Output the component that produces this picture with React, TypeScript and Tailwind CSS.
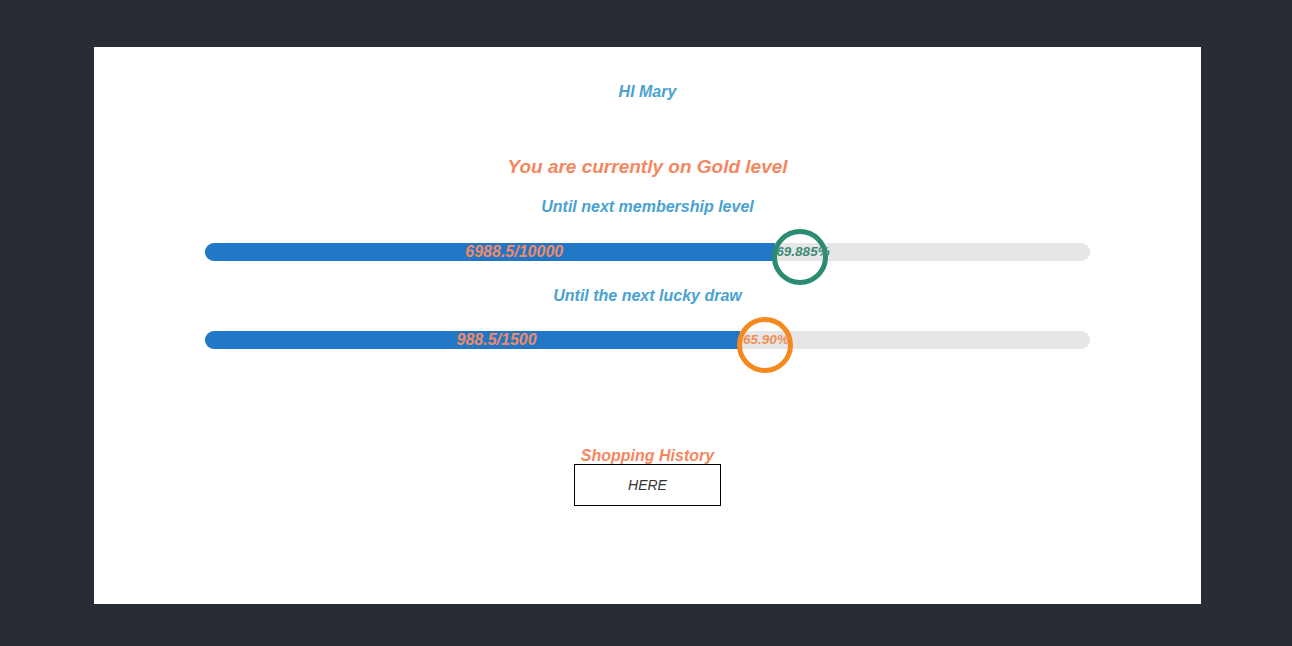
import React from "react";

const BAR_W = 885;

function Progress({
  value,
  label,
  pct,
  ringClass,
  pctTextClass,
  textShift,
}: {
  value: number;
  label: string;
  pct: string;
  ringClass: string;
  pctTextClass: string;
  textShift: number;
}) {
  const fillW = value * BAR_W;
  const circleLeft = Math.round(fillW - 51);
  return (
    <div className="relative h-[18px] w-[885px] rounded-full bg-[#e6e6e6]">
      <div
        className="absolute left-0 top-0 h-[18px] rounded-l-full bg-[#2276c6]"
        style={{ width: circleLeft + 3 }}
      />
      <span
        className="absolute left-0 top-0 h-[18px] text-center text-[16px] font-bold italic leading-[18px] text-[#ef8a68]"
        style={{ width: fillW }}
      >
        {label}
      </span>
      <div
        className={`absolute top-[-14px] h-[56px] w-[56px] rounded-full border-[5px] ${ringClass}`}
        style={{ left: circleLeft }}
      />
      <span
        className={`absolute top-0 h-[18px] w-[56px] whitespace-nowrap text-center text-[13.5px] font-bold italic leading-[18px] ${pctTextClass}`}
        style={{ left: circleLeft + textShift }}
      >
        {pct}
      </span>
    </div>
  );
}

export default function App() {
  return (
    <div
      className="h-[646px] w-[1292px] bg-[#282c34] pl-[94px] pt-[47px]"
      style={{ fontFamily: '"Liberation Sans", Arial, sans-serif' }}
    >
      <div className="flex h-[557px] w-[1107px] flex-col items-center bg-white pt-[35px]">
        <div className="h-[20px] text-[16px] font-bold italic leading-[20px] text-[#4aa2d2]">
          HI Mary
        </div>
        <div className="mt-[53px] h-[24px] text-[19px] font-bold italic leading-[24px] text-[#f4875f]">
          You are currently on Gold level
        </div>
        <div className="mt-[18px] h-[20px] text-[16px] font-bold italic leading-[20px] text-[#4aa2d2]">
          Until next membership level
        </div>
        <div className="mt-[26px]">
          <Progress
            value={0.69885}
            label="6988.5/10000"
            pct="69.885%"
            ringClass="border-[#2b8a72]"
            pctTextClass="text-[#3d8a78]"
            textShift={3}
          />
        </div>
        <div className="mt-[25px] h-[20px] text-[16px] font-bold italic leading-[20px] text-[#4aa2d2]">
          Until the next lucky draw
        </div>
        <div className="mt-[25px]">
          <Progress
            value={0.659}
            label="988.5/1500"
            pct="65.90%"
            ringClass="border-[#f5891e]"
            pctTextClass="text-[#f08f55]"
            textShift={1}
          />
        </div>
        <div className="mt-[98px] h-[17px] text-[16px] font-bold italic leading-[17px] text-[#f4875f]">
          Shopping History
        </div>
        <div className="flex h-[42px] w-[147px] items-center justify-center border border-black text-[14px] font-medium italic text-[#333333]">
          HERE
        </div>
      </div>
    </div>
  );
}
